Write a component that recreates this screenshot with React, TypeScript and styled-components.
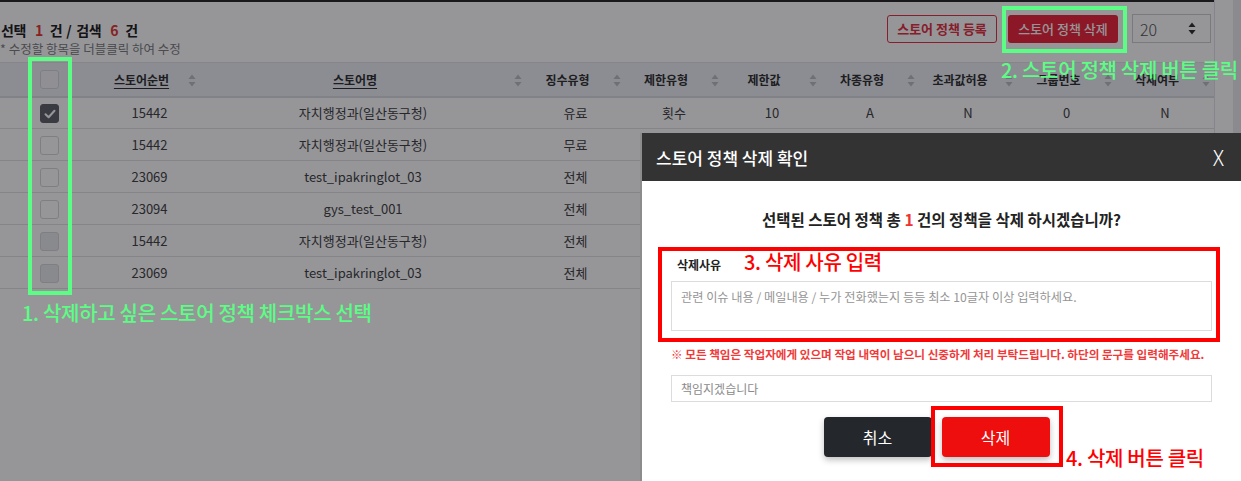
import React from "react";
import styled, { createGlobalStyle } from "styled-components";

const GlobalStyle = createGlobalStyle`
  html, body {
    margin: 0;
    padding: 0;
  }

  body {
    width: 1241px;
    height: 481px;
    overflow: hidden;
    background: #ffffff;
    font-family: "Noto Sans CJK KR", "Noto Sans", sans-serif;
    color: #333;
  }

  * {
    box-sizing: border-box;
  }
`;

type Row = {
  no: string;
  name: string;
  fee: string;
  limitType: string;
  limit: string;
  car: string;
  over: string;
  group: string;
  deleted: string;
  box: "checked" | "empty" | "disabled";
};

const rows: Row[] = [
  { no: "15442", name: "자치행정과(일산동구청)", fee: "유료", limitType: "횟수", limit: "10", car: "A", over: "N", group: "0", deleted: "N", box: "checked" },
  { no: "15442", name: "자치행정과(일산동구청)", fee: "무료", limitType: "", limit: "", car: "", over: "", group: "", deleted: "", box: "empty" },
  { no: "23069", name: "test_ipakringlot_03", fee: "전체", limitType: "", limit: "", car: "", over: "", group: "", deleted: "", box: "empty" },
  { no: "23094", name: "gys_test_001", fee: "전체", limitType: "", limit: "", car: "", over: "", group: "", deleted: "", box: "empty" },
  { no: "15442", name: "자치행정과(일산동구청)", fee: "전체", limitType: "", limit: "", car: "", over: "", group: "", deleted: "", box: "disabled" },
  { no: "23069", name: "test_ipakringlot_03", fee: "전체", limitType: "", limit: "", car: "", over: "", group: "", deleted: "", box: "disabled" },
];

const columns = [
  { title: "스토어순번", width: 101, link: true },
  { title: "스토어명", width: 326, link: true },
  { title: "징수유형", width: 99 },
  { title: "제한유형", width: 98 },
  { title: "제한값", width: 98 },
  { title: "차종유형", width: 98 },
  { title: "초과값허용", width: 98 },
  { title: "그룹번호", width: 99 },
  { title: "삭제여부", width: 98 },
];

const SortIcon = () => (
  <SortMark width="8" height="13" viewBox="0 0 8 13">
    <path d="M4 0.5 L7.5 5 H0.5 Z" fill="currentColor" />
    <path d="M4 12.5 L7.5 8 H0.5 Z" fill="currentColor" />
  </SortMark>
);

const CheckMark = () => (
  <svg width="12" height="10" viewBox="0 0 12 10">
    <path d="M1.5 5.2 L4.6 8.2 L10.5 1.8" fill="none" stroke="#fff" strokeWidth="2" strokeLinecap="round" strokeLinejoin="round" />
  </svg>
);

const SelectArrows = () => (
  <svg width="8" height="13" viewBox="0 0 8 13">
    <path d="M4 0.5 L7.5 5 H0.5 Z" fill="#333" />
    <path d="M4 12.5 L7.5 8 H0.5 Z" fill="#333" />
  </svg>
);

export default function App() {
  return (
    <>
      <GlobalStyle />
      <Page>
        <Content>
          <Toolbar>
            <Summary>
              <Count>
                선택<Num>1</Num>건<Slash>/</Slash>검색<Num>6</Num>건
              </Count>
              <Hint>* 수정할 항목을 더블클릭 하여 수정</Hint>
            </Summary>
            <Actions>
              <OutlineButton>스토어 정책 등록</OutlineButton>
              <DangerButton>스토어 정책 삭제</DangerButton>
              <PageSize>
                <span>20</span>
                <SelectArrows />
              </PageSize>
            </Actions>
          </Toolbar>

          <Table>
            <colgroup>
              <col style={{ width: 99 }} />
              {columns.map((c) => (
                <col key={c.title} style={{ width: c.width }} />
              ))}
            </colgroup>
            <thead>
              <tr>
                <HeadCell $plain>
                  <Box $state="head" />
                </HeadCell>
                {columns.map((c) => (
                  <HeadCell key={c.title}>
                    <HeadLabel $link={c.link}>{c.title}</HeadLabel>
                    <SortIcon />
                  </HeadCell>
                ))}
              </tr>
            </thead>
            <tbody>
              {rows.map((r, i) => (
                <tr key={i}>
                  <Cell>
                    <Box $state={r.box}>{r.box === "checked" && <CheckMark />}</Box>
                  </Cell>
                  <Cell>{r.no}</Cell>
                  <Cell>{r.name}</Cell>
                  <Cell>{r.fee}</Cell>
                  <Cell>{r.limitType}</Cell>
                  <Cell>{r.limit}</Cell>
                  <Cell>{r.car}</Cell>
                  <Cell>{r.over}</Cell>
                  <Cell>{r.group}</Cell>
                  <Cell>{r.deleted}</Cell>
                </tr>
              ))}
            </tbody>
          </Table>
        </Content>
        <Gutter />
        <ScrollTrack />

        <Backdrop />

        <Modal>
          <ModalHeader>
            <ModalTitle>스토어 정책 삭제 확인</ModalTitle>
            <CloseX>X</CloseX>
          </ModalHeader>
          <ModalBody>
            <Question>
              선택된 스토어 정책 총 <QNum>1</QNum> 건의 정책을 삭제 하시겠습니까?
            </Question>
            <FieldLabel>삭제사유</FieldLabel>
            <ReasonArea placeholder="관련 이슈 내용 / 메일내용 / 누가 전화했는지 등등 최소 10글자 이상 입력하세요." />
            <Warning>
              ※ 모든 책임은 작업자에게 있으며 작업 내역이 남으니 신중하게 처리 부탁드립니다. 하단의 문구를 입력해주세요.
            </Warning>
            <ConfirmInput placeholder="책임지겠습니다" />
            <ButtonRow>
              <ModalButton $variant="dark">취소</ModalButton>
              <ModalButton $variant="red">삭제</ModalButton>
            </ButtonRow>
          </ModalBody>
        </Modal>

        <Mark $color="#5cfd84" style={{ left: 28, top: 57, width: 44, height: 238 }} />
        <Note $color="#5cfd84" style={{ left: 22, top: 299 }}>
          1. 삭제하고 싶은 스토어 정책 체크박스 선택
        </Note>
        <Mark $color="#5cfd84" style={{ left: 1002, top: 6, width: 125, height: 47 }} />
        <Note $color="#5cfd84" style={{ left: 1001, top: 56 }}>
          2. 스토어 정책 삭제 버튼 클릭
        </Note>
        <Mark $color="#ff0000" style={{ left: 658, top: 247, width: 562, height: 95 }} />
        <Note $color="#ff0000" style={{ left: 744, top: 248 }}>
          3. 삭제 사유 입력
        </Note>
        <Mark $color="#ff0000" style={{ left: 931, top: 406, width: 132, height: 61 }} />
        <Note $color="#ff0000" style={{ left: 1066, top: 444 }}>
          4. 삭제 버튼 클릭
        </Note>
      </Page>
    </>
  );
}

const Page = styled.div`
  position: relative;
  width: 1241px;
  height: 481px;
  overflow: hidden;
  display: flex;
  background: #ffffff;
`;

const Content = styled.div`
  width: 1214px;
  flex-shrink: 0;
  border-top: 2px solid #2b2b2b;
`;

const Gutter = styled.div`
  flex: 1;
  border-left: 1px solid #e4e4e6;
`;

const ScrollTrack = styled.div`
  width: 8px;
  background: #ececee;
`;

const Toolbar = styled.div`
  height: 60px;
  padding: 12px 3px 0 0;
  display: flex;
  justify-content: space-between;
  align-items: flex-start;
`;

const Summary = styled.div`
  padding-top: 6px;
  display: flex;
  flex-direction: column;
`;

const Count = styled.div`
  font-size: 14px;
  line-height: 20px;
  font-weight: 700;
  color: #222;
  letter-spacing: -0.4px;
  padding-left: 1px;
`;

const Num = styled.span`
  color: #e53935;
  margin: 0 7px 0 9px;
`;

const Slash = styled.span`
  margin: 0 5px 0 4px;
`;

const Hint = styled.div`
  font-size: 12.5px;
  line-height: 18px;
  color: #808080;
`;

const Actions = styled.div`
  display: flex;
  align-items: center;
  height: 29px;
`;

const OutlineButton = styled.button`
  height: 28px;
  width: 110px;
  margin-right: 11px;
  border: 1px solid #e53344;
  border-radius: 3px;
  background: #fff;
  color: #e53344;
  font-family: inherit;
  font-size: 13px;
  font-weight: 700;
  padding: 0;
`;

const DangerButton = styled.button`
  height: 28px;
  width: 110px;
  margin-right: 14px;
  border: none;
  border-radius: 3px;
  background: #ee2a3e;
  color: #fff;
  font-family: inherit;
  font-size: 13px;
  font-weight: 500;
  padding: 0;
`;

const PageSize = styled.div`
  width: 79px;
  height: 29px;
  border: 1px solid #cfcfcf;
  display: flex;
  align-items: center;
  justify-content: space-between;
  padding: 0 14px 0 7px;
  font-size: 16px;
  font-weight: 300;
  color: #555;
  background: #fff;
`;

const Table = styled.table`
  width: 1214px;
  table-layout: fixed;
  border-collapse: collapse;
`;

const HeadCell = styled.th<{ $plain?: boolean }>`
  position: relative;
  height: 34px;
  padding: ${(p) => (p.$plain ? "0" : "0 26px 0 10px")};
  background: #eef0f3;
  border-top: 1px solid #e2e3e6;
  border-bottom: 2px solid #dcdde0;
  text-align: center;
  vertical-align: middle;
  font-size: 12px;
  font-weight: 700;
  color: #333;
  white-space: nowrap;
`;

const HeadLabel = styled.span<{ $link?: boolean }>`
  text-decoration: ${(p) => (p.$link ? "underline" : "none")};
  text-underline-offset: 3px;
`;

const SortMark = styled.svg`
  position: absolute;
  right: 4px;
  top: 11px;
  color: #bdbec2;
`;

const Cell = styled.td`
  height: 32px;
  padding: 0 6px;
  border-bottom: 1px solid #e0e1e4;
  text-align: center;
  vertical-align: middle;
  font-size: 13px;
  color: #444;
  white-space: nowrap;
`;

const Box = styled.span<{ $state: "head" | "checked" | "empty" | "disabled" }>`
  display: inline-flex;
  align-items: center;
  justify-content: center;
  vertical-align: middle;
  width: 19px;
  height: 19px;
  border-radius: 3px;
  border: 1px solid
    ${(p) => (p.$state === "checked" ? "#62646c" : "#d6d7da")};
  background: ${(p) =>
    p.$state === "checked"
      ? "#62646c"
      : p.$state === "disabled"
      ? "#e9eaed"
      : p.$state === "head"
      ? "#f3f4f6"
      : "#ffffff"};
`;

const Backdrop = styled.div`
  position: absolute;
  inset: 0;
  background: rgba(0, 1, 8, 0.41);
`;

const Modal = styled.div`
  position: absolute;
  left: 640px;
  top: 133px;
  width: 602px;
  height: 360px;
  background: #fff;
  border-left: 2px solid #8c8c8c;
`;

const ModalHeader = styled.div`
  height: 48px;
  background: #333333;
  display: flex;
  align-items: center;
  justify-content: space-between;
  padding: 0 18px 0 14px;
`;

const ModalTitle = styled.div`
  color: #fff;
  font-size: 17px;
  font-weight: 500;
`;

const CloseX = styled.div`
  color: #fff;
  font-size: 21px;
  font-weight: 300;
`;

const ModalBody = styled.div`
  padding: 26px 30px 0 29px;
  display: flex;
  flex-direction: column;
`;

const Question = styled.div`
  text-align: center;
  font-size: 15.5px;
  line-height: 24px;
  font-weight: 700;
  color: #222;
`;

const QNum = styled.span`
  color: #ee3333;
`;

const FieldLabel = styled.div`
  margin-top: 25px;
  padding-left: 6px;
  font-size: 12px;
  line-height: 18px;
  font-weight: 700;
  color: #222;
`;

const ReasonArea = styled.textarea`
  margin-top: 7px;
  height: 50px;
  width: 100%;
  resize: none;
  border: 1px solid #dcdcdc;
  padding: 6px 9px;
  font-family: inherit;
  font-size: 12.2px;
  line-height: 18px;

  &::placeholder {
    color: #959595;
  }
`;

const Warning = styled.div`
  margin-top: 15px;
  font-size: 11.6px;
  line-height: 16px;
  font-weight: 700;
  color: #f03a3a;
  white-space: nowrap;
`;

const ConfirmInput = styled.input`
  margin-top: 13px;
  height: 27px;
  width: 100%;
  border: 1px solid #dcdcdc;
  padding: 0 9px;
  font-family: inherit;
  font-size: 12px;

  &::placeholder {
    color: #8a8a8a;
  }
`;

const ButtonRow = styled.div`
  margin-top: 15px;
  display: flex;
  justify-content: center;
  gap: 10px;
  padding-right: 10px;
`;

const ModalButton = styled.button<{ $variant: "dark" | "red" }>`
  width: 108px;
  height: 40px;
  border: none;
  border-radius: 4px;
  background: ${(p) => (p.$variant === "dark" ? "#24282c" : "#ee0e0e")};
  color: #fff;
  font-family: inherit;
  font-size: 16px;
  box-shadow: 0 3px 6px rgba(0, 0, 0, 0.25);
`;

const Mark = styled.div<{ $color: string }>`
  position: absolute;
  border: 4px solid ${(p) => p.$color};
`;

const Note = styled.div<{ $color: string }>`
  position: absolute;
  color: ${(p) => p.$color};
  font-size: 20px;
  line-height: 28px;
  font-weight: 500;
  white-space: nowrap;
  letter-spacing: -0.3px;
`;
